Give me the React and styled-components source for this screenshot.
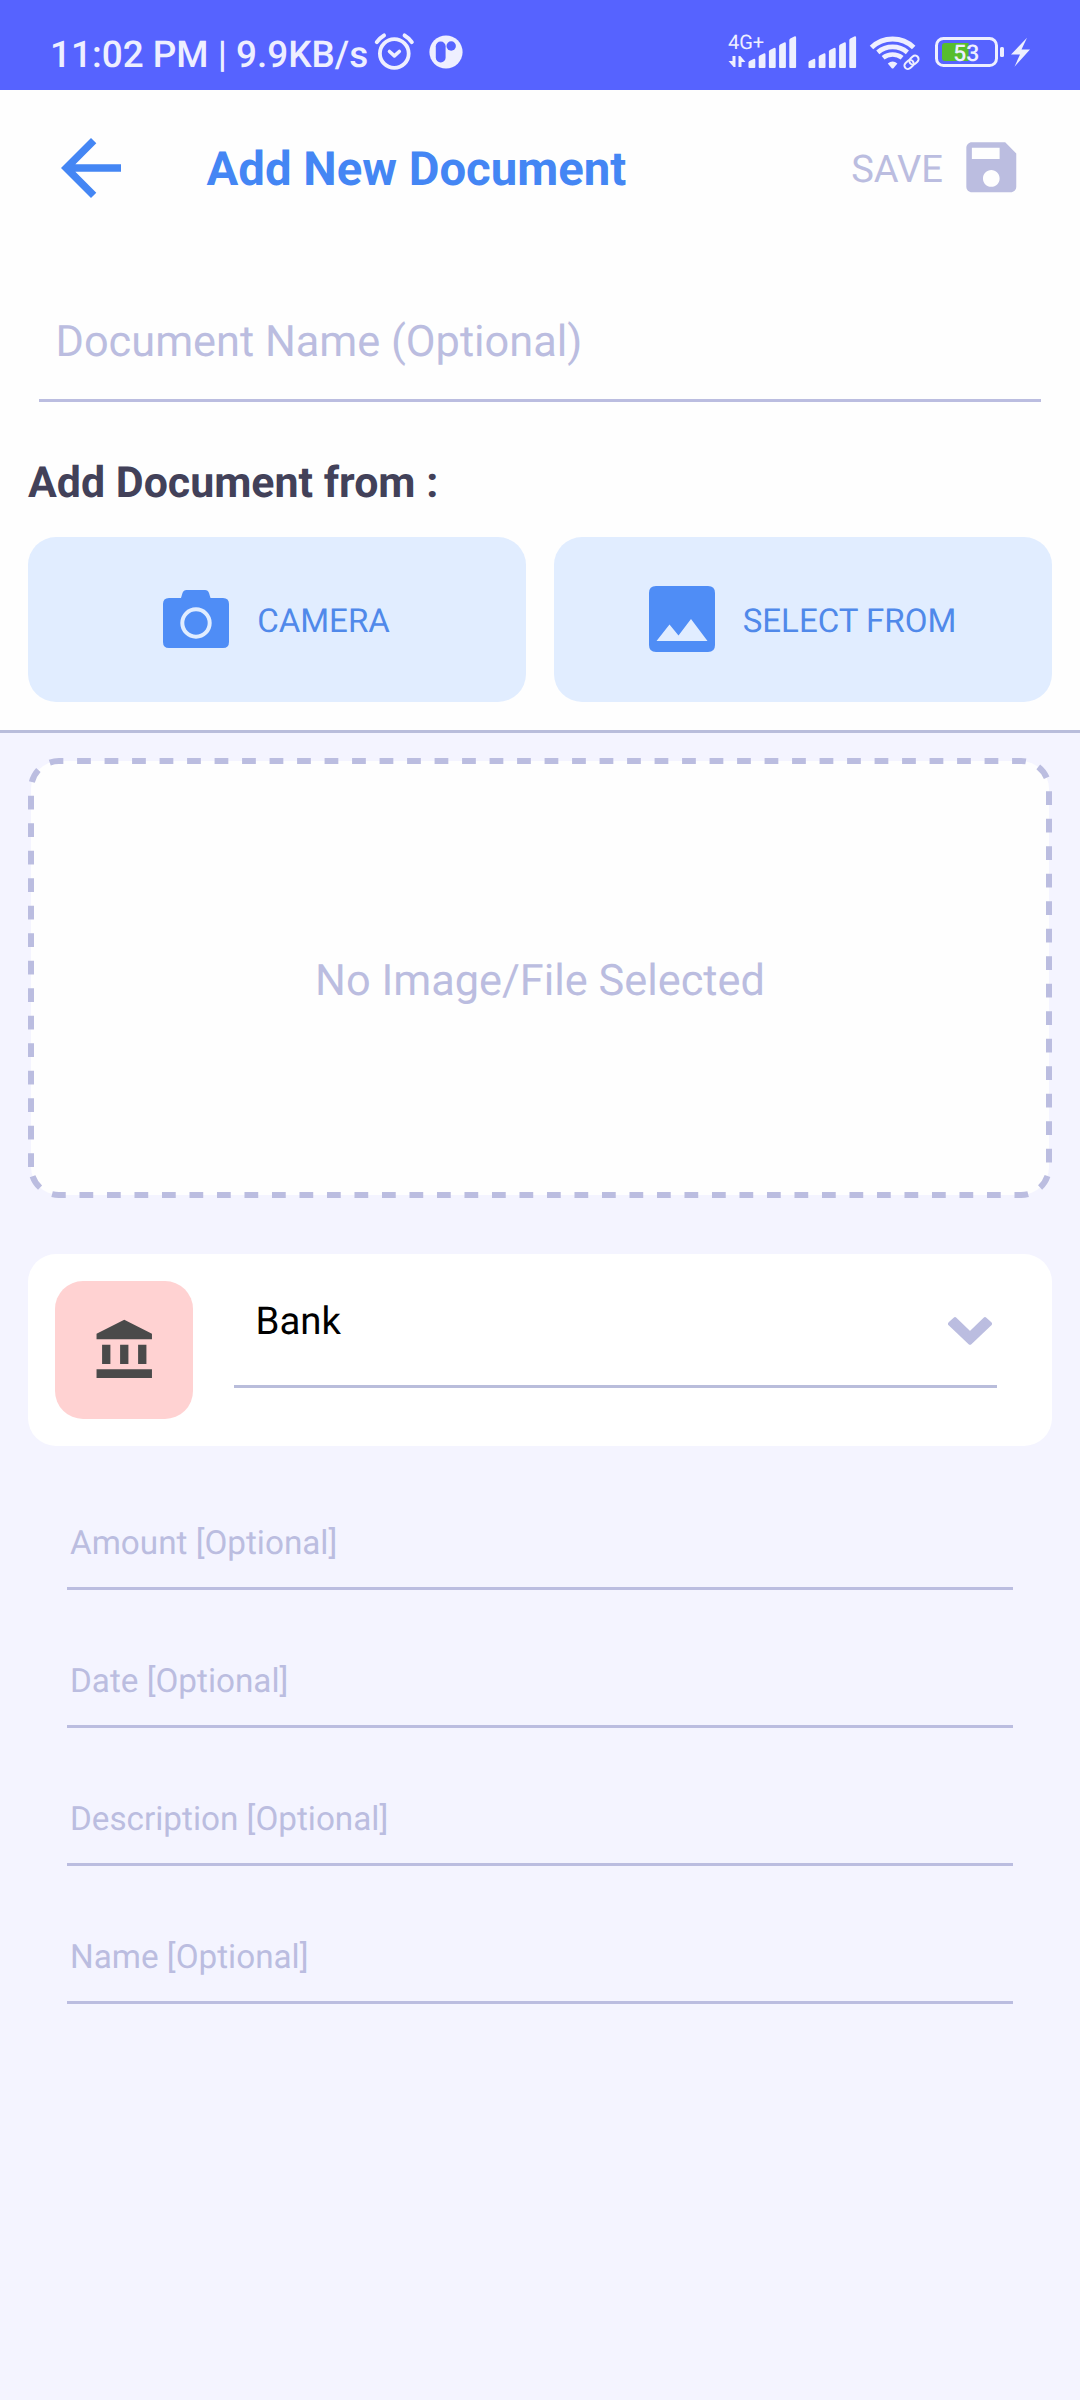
import React from "react";
import styled, { createGlobalStyle } from "styled-components";

const lilac = "#bbbde0";

const Global = createGlobalStyle`
  * { box-sizing: border-box; }
  body {
    margin: 0;
    background: #f4f4ff;
    font-family: Roboto, "Noto Sans", sans-serif;
    text-rendering: geometricPrecision;
  }
`;

const Screen = styled.div`
  width: 1080px;
  height: 2400px;
  background: #f4f4ff;
  display: flex;
  flex-direction: column;
  overflow: hidden;
`;

const StatusBar = styled.header`
  height: 90px;
  background: #5663ff;
  color: #eeefff;
  display: flex;
  align-items: flex-start;
  padding: 25px 48px 0 50px;
`;

const Clock = styled.span`
  width: 323px;
  height: 61px;
  line-height: 61px;
  font-size: 36.9px;
  font-weight: 500;
  white-space: nowrap;
`;

const StatusIcon = styled.svg`
  display: block;
  flex: none;
  height: 50px;
  width: ${(p) => p.$w}px;
  margin-left: ${(p) => p.$gap || 0}px;
  font-family: Roboto, sans-serif;
`;

const Spacer = styled.div`
  flex: 1;
`;

const Top = styled.section`
  height: 643px;
  background: #fefefe;
  border-bottom: 3px solid #b9bddb;
  display: flex;
  flex-direction: column;
`;

const AppBar = styled.div`
  height: 156px;
  display: flex;
  align-items: center;
  padding: 0 55.7px 0 46px;
`;

const Icon = styled.svg`
  display: block;
  flex: none;
  width: ${(p) => p.$size}px;
  height: ${(p) => p.$size}px;
  margin-bottom: ${(p) => p.$lift || 0}px;
  fill: ${(p) => p.$color};
`;

const Title = styled.h1`
  margin: 0 0 0 70.5px;
  padding-top: 2px;
  flex: 1;
  font-size: 47.3px;
  font-weight: 700;
  line-height: 56px;
  color: #4486f4;
  white-space: nowrap;
`;

const Save = styled.span`
  padding-top: 4px;
  font-size: 38.1px;
  line-height: 46px;
  color: ${lilac};
  margin-right: 14.8px;
`;

const NameField = styled.div`
  margin: 62px 39px 0;
  height: 94px;
  padding: 7.5px 16.5px 0;
  border-bottom: 3px solid ${lilac};
  font-size: 43.3px;
  line-height: 52px;
  color: ${lilac};
`;

const Heading = styled.h2`
  margin: 55px 28px 0;
  font-size: 42.9px;
  line-height: 52px;
  font-weight: 700;
  color: #424159;
`;

const Sources = styled.div`
  display: grid;
  grid-template-columns: 1fr 1fr;
  gap: 28px;
  padding: 0 28px;
  margin-top: 28px;
`;

const SourceButton = styled.div`
  height: 165px;
  padding-right: 8px;
  border-radius: 28px;
  background: #e1edff;
  display: flex;
  align-items: center;
  justify-content: center;
  gap: 21px;
`;

const SourceLabel = styled.span`
  padding-top: 4px;
  font-size: 33.1px;
  line-height: 39px;
  color: #5089ea;
  white-space: nowrap;
`;

const Preview = styled.div`
  position: relative;
  height: 440px;
  margin: 25px 28px 0;
  padding-top: 4px;
  border: 3px solid transparent;
  border-radius: 31px;
  background: #fefefe padding-box;
  display: flex;
  align-items: center;
  justify-content: center;
  font-size: 43.3px;
  color: ${lilac};
`;

const Dashes = styled.svg`
  position: absolute;
  left: -3px;
  top: -3px;
  width: 1024px;
  height: 440px;
  fill: none;
  stroke: ${lilac};
  stroke-width: 6;
  stroke-dasharray: 13.75 13.75;
`;

const CategoryCard = styled.div`
  height: 192px;
  margin: 56px 28px 0;
  padding: 27px 55px 0 27px;
  border-radius: 28px;
  background: #fff;
  display: flex;
`;

const CategoryTile = styled.div`
  width: 138px;
  height: 138px;
  border-radius: 28px;
  background: #ffd2d2;
  display: flex;
  align-items: center;
  justify-content: center;
`;

const Select = styled.div`
  flex: 1;
  height: 107px;
  margin-left: 41px;
  padding: 0 5px 0 21.5px;
  border-bottom: 3px solid #b9bddb;
  display: flex;
  align-items: flex-start;
  justify-content: space-between;
  font-size: 38.4px;
  color: #000;
`;

const SelectValue = styled.span`
  line-height: 46px;
  margin-top: 18px;
`;

const Chevron = styled.svg`
  width: 44px;
  height: 28px;
  margin-top: 36px;
  fill: ${lilac};
  stroke: ${lilac};
`;

const Details = styled.div`
  margin: 44px 67px 0;
  display: flex;
  flex-direction: column;
  gap: 38px;
`;

const DetailField = styled.div`
  height: 100px;
  padding: 34px 3px 0;
  border-bottom: 3px solid ${lilac};
  font-size: 33.25px;
  line-height: 40px;
  color: ${lilac};
`;

const bars = (x0) =>
  [8, 13.5, 19, 24.5, 30.5].map((h, i) => (
    <path
      key={i}
      d={`M${x0 + i * 10.2} 67v${-(h - 3.5)}q0-1 1-1.6l4-1.9q1.8-.6 1.8 1.2v${h - 1.2}q0 1-1 1h-4.8q-1 0-1-1z`}
    />
  ));

function AlarmIcon() {
  return (
    <StatusIcon $w={42} viewBox="373 25 42 50" fill="none" stroke="currentColor" strokeLinecap="round" strokeLinejoin="round">
      <circle cx="394.3" cy="53.5" r="14.4" strokeWidth="3.8" />
      <path d="M389.5 51.5l4.9 4.4 4.9-4.4" strokeWidth="3.6" />
      <path d="M376.8 42.2q3-4.4 7.2-6.8M411.8 42.2q-3-4.4-7.2-6.8" strokeWidth="4" />
    </StatusIcon>
  );
}

function NotificationIcon() {
  return (
    <StatusIcon $w={36} $gap={13} viewBox="428 25 36 50">
      <circle cx="446" cy="52" r="16.6" fill="currentColor" />
      <rect x="435.8" y="41.5" width="9.8" height="21" rx="4.8" fill="#5663ff" />
      <circle cx="451.2" cy="46" r="4.7" fill="#5663ff" />
    </StatusIcon>
  );
}

function MobileSignal() {
  return (
    <StatusIcon $w={70} viewBox="727 25 70 50" fill="currentColor">
      <text x="728" y="49" fontSize="20">4G+</text>
      <path d="M732.5 56h3v11h-1.8l-5.2-6h4zM738.5 67v-11h1.8l5.2 6h-4v5z" />
      {bars(748.5)}
    </StatusIcon>
  );
}

function SecondSignal() {
  return (
    <StatusIcon $w={50} $gap={11} viewBox="808 25 50 50" fill="currentColor">
      {bars(808.5)}
    </StatusIcon>
  );
}

function WifiIcon() {
  return (
    <StatusIcon $w={52} $gap={11} viewBox="869 25 52 50" fill="none" stroke="currentColor">
      <path d="M871.5 47.5A30.5 30.5 0 0 1 913.7 47.5" strokeWidth="5" />
      <path d="M877.8 52.3A23 23 0 0 1 907.4 52.3" strokeWidth="4.8" />
      <path d="M883.1 57.8A15.5 15.5 0 0 1 902.1 57.8" strokeWidth="4.6" />
      <path d="M887.8 63.5q4.8-4 9.6 0l-3.7 4.5q-1.1 1-2.2 0z" fill="currentColor" stroke="none" />
      <g transform="rotate(-42 911.5 62.3)" strokeWidth="2">
        <rect x="903.2" y="58.8" width="10" height="7" rx="3.5" />
        <rect x="909.8" y="58.8" width="10" height="7" rx="3.5" />
      </g>
    </StatusIcon>
  );
}

function BatteryIcon() {
  return (
    <StatusIcon $w={98} $gap={13} viewBox="934 25 98 50" fill="currentColor">
      <rect x="936.5" y="38.5" width="60" height="27" rx="7" fill="none" stroke="currentColor" strokeWidth="3" />
      <path d="M968.5 43h-23.5q-3 0-3 3v12q0 3 3 3h23.5z" fill="#57bd2c" />
      <rect x="1000" y="47" width="4" height="10" rx="1.5" />
      <text x="953.2" y="61" fontSize="23" fontWeight="500">53</text>
      <path d="M1027 37.7L1011 54.5h9l-5.5 12.2L1030 49.5h-8.5z" />
    </StatusIcon>
  );
}

const fields = ["Amount [Optional]", "Date [Optional]", "Description [Optional]", "Name [Optional]"];

export default function App() {
  return (
    <Screen>
      <Global />
      <StatusBar>
        <Clock>11:02 PM | 9.9KB/s</Clock>
        <AlarmIcon />
        <NotificationIcon />
        <Spacer />
        <MobileSignal />
        <SecondSignal />
        <WifiIcon />
        <BatteryIcon />
      </StatusBar>

      <Top>
        <AppBar>
          <Icon $size={90} $color="#4486f4" viewBox="0 0 24 24">
            <path d="M20 11H7.83l5.59-5.59L12 4l-8 8 8 8 1.41-1.41L7.83 13H20v-2z" />
          </Icon>
          <Title>Add New Document</Title>
          <Save>SAVE</Save>
          <Icon $size={66.6} $lift={2} $color={lilac} viewBox="0 0 24 24">
            <path d="M17 3H5c-1.11 0-2 .9-2 2v14c0 1.1.89 2 2 2h14c1.1 0 2-.9 2-2V7l-4-4zm-5 16c-1.66 0-3-1.34-3-3s1.34-3 3-3 3 1.34 3 3-1.34 3-3 3zm3-10H5V5h10v4z" />
          </Icon>
        </AppBar>
        <NameField>Document Name (Optional)</NameField>
        <Heading>Add Document from :</Heading>
        <Sources>
          <SourceButton>
            <Icon $size={80} $lift={1} $color="#4f8df6" viewBox="0 0 80 80">
              <path d="M13 19h12l1.5-5q1-3 4-3h18.5q3 0 4 3l1.5 5h12.5q6 0 6 6v38q0 6-6 6h-54q-6 0-6-6v-38q0-6 6-6z" />
              <circle cx="40" cy="44" r="13.7" fill="none" stroke="#e1edff" strokeWidth="4" />
            </Icon>
            <SourceLabel>CAMERA</SourceLabel>
          </SourceButton>
          <SourceButton>
            <Icon $size={80} $lift={1} $color="#4f8df6" viewBox="0 0 80 80">
              <path fillRule="evenodd" d="M14 7h52q7 0 7 7v52q0 7-7 7h-52q-7 0-7-7v-52q0-7 7-7zM14.5 62h51l-16.5-22-12.5 16.5-9-11z" />
            </Icon>
            <SourceLabel>SELECT FROM</SourceLabel>
          </SourceButton>
        </Sources>
      </Top>

      <Preview>
        <Dashes viewBox="0 0 1024 440">
          <path d="M3 409V31A28 28 0 0 1 31 3H993A28 28 0 0 1 1021 31V409A28 28 0 0 1 993 437H31A28 28 0 0 1 3 409" />
        </Dashes>
        No Image/File Selected
      </Preview>

      <CategoryCard>
        <CategoryTile>
          <Icon $size={66.5} $color="#4a4a4a" viewBox="0 0 24 24">
            <path d="M12 1L2 6v2h20V6zM4 10h3v7H4zM10.5 10h3v7h-3zM17 10h3v7h-3zM2 18.9h20V22H2z" />
          </Icon>
        </CategoryTile>
        <Select>
          <SelectValue>Bank</SelectValue>
          <Chevron viewBox="0 0 44 28" strokeWidth="4" strokeLinejoin="round">
            <path d="M22 16.7L37 2.2L42 6.8L22 25.7L2 6.8L7 2.2z" />
          </Chevron>
        </Select>
      </CategoryCard>

      <Details>
        {fields.map((f) => (
          <DetailField key={f}>{f}</DetailField>
        ))}
      </Details>
    </Screen>
  );
}
